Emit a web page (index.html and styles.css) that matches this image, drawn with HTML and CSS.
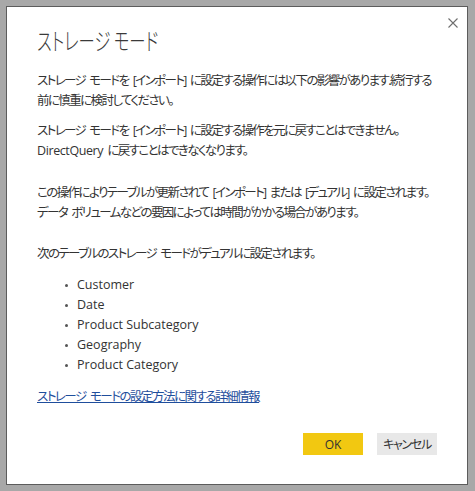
FILE: index.html
```html
<!DOCTYPE html>
<html lang="ja">
<head>
<meta charset="utf-8">
<link rel="stylesheet" href="styles.css">
</head>
<body>
<div class="dialog">
  <button class="close" aria-label="閉じる">
    <svg width="10" height="10" viewBox="0 0 10 10"><path d="M0.5 0.5 L9.5 9.5 M9.5 0.5 L0.5 9.5" stroke="#6e6e6e" stroke-width="1.1" fill="none"/></svg>
  </button>
  <h1 class="title">ストレージ モード</h1>
  <p class="para">ストレージ モードを [インポート] に設定する操作には以下の影響があります.続行する<br>前に慎重に検討してください。</p>
  <p class="para para-2">ストレージ モードを [インポート] に設定する操作を元に戻すことはできません。<br><span class="latin">DirectQuery</span> に戻すことはできなくなります。</p>
  <p class="para para-3">この操作によりテーブルが更新されて [インポート] または [デュアル] に設定されます。<br>データ ボリュームなどの要因によっては時間がかかる場合があります。</p>
  <p class="para para-4">次のテーブルのストレージ モードがデュアルに設定されます。</p>
  <ul class="tables">
    <li class="table-item">Customer</li>
    <li class="table-item">Date</li>
    <li class="table-item">Product Subcategory</li>
    <li class="table-item">Geography</li>
    <li class="table-item">Product Category</li>
  </ul>
  <a class="more-link" href="#">ストレージ モードの設定方法に関する詳細情報</a>
  <div class="actions">
    <button class="btn btn-primary">OK</button>
    <button class="btn btn-secondary">キャンセル</button>
  </div>
</div>
</body>
</html>
```
FILE: styles.css
```css
html, body {
  margin: 0;
  padding: 0;
}
body {
  width: 475px;
  height: 491px;
  background: #a8a8a8;
  padding: 6px 7px 6px 6px;
  box-sizing: border-box;
  font-family: "Open Sans", "Noto Sans CJK JP", sans-serif;
  font-feature-settings: "palt";
  color: #333333;
  overflow: hidden;
}
.dialog {
  position: relative;
  box-sizing: border-box;
  height: 479px;
  background: #ffffff;
  border: 1px solid #5c5c5c;
  padding: 17px 30px 0 30px;
  display: flex;
  flex-direction: column;
}
.close {
  position: absolute;
  top: 8px;
  right: 6px;
  width: 16px;
  height: 16px;
  padding: 0;
  border: 0;
  background: transparent;
  display: flex;
  align-items: center;
  justify-content: center;
}
.title {
  margin: 0;
  font-family: "Noto Sans CJK JP", sans-serif;
  font-weight: 300;
  font-size: 24px;
  line-height: 32px;
  color: #3a3a3a;
  white-space: nowrap;
  transform: scaleX(0.68);
  transform-origin: left center;
}
.para {
  margin: 15px 0 0 0;
  font-size: 12.5px;
  line-height: 20px;
  letter-spacing: -1.6px;
  word-spacing: 2.5px;
  white-space: nowrap;
}
.latin { letter-spacing: -0.4px; }
.para-2 { margin-top: 10px; }
.para-3 { margin-top: 22px; }
.para-4 { margin-top: 21px; }
.tables {
  list-style: none;
  margin: 11px 0 0 0;
  padding: 0 0 0 28px;
  font-size: 12.5px;
  line-height: 20px;
}
.table-item {
  display: flex;
  align-items: center;
  gap: 9px;
}
.table-item::before {
  content: "";
  width: 3px;
  height: 3px;
  border-radius: 50%;
  background: #555555;
}
.more-link {
  margin-top: 12px;
  align-self: flex-start;
  font-size: 12.5px;
  line-height: 20px;
  letter-spacing: -1.5px;
  word-spacing: 2.5px;
  color: #1f4e9c;
  text-decoration: underline;
}
.actions {
  margin-top: 26px;
  display: flex;
  justify-content: flex-end;
  gap: 14px;
}
.btn {
  width: 60px;
  height: 22px;
  padding: 0;
  border: 0;
  font-family: "Open Sans", "Noto Sans CJK JP", sans-serif;
  font-feature-settings: "palt";
  font-size: 12px;
  color: #333333;
}
.btn-primary { background: #f2c811; }
.btn-secondary { background: #e8e8e8; letter-spacing: -1.3px; }
```
